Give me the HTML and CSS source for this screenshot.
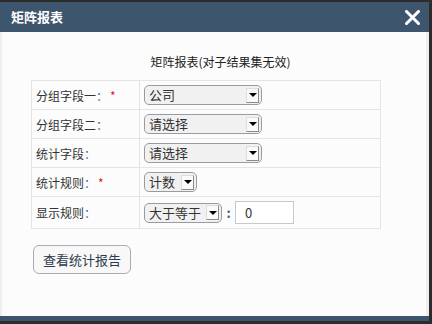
FILE: index.html
```html
<!DOCTYPE html>
<html>
<head>
<meta charset="utf-8">
<link rel="stylesheet" href="styles.css">
</head>
<body>
<div class="dialog">
  <div class="header">
    <span class="title">矩阵报表</span>
    <svg class="close" width="15" height="15" viewBox="0 0 15 15"><path d="M1.5 1.5 L13.5 13.5 M13.5 1.5 L1.5 13.5" stroke="#fff" stroke-width="3" stroke-linecap="square"/></svg>
  </div>
  <div class="body">
    <div class="caption">矩阵报表(对子结果集无效)</div>
    <table class="form">
      <tr class="r">
        <td class="label">分组字段一<span class="colon">：</span><span class="req">*</span></td>
        <td class="field"><div class="sel w117"><span class="val">公司</span><span class="btn"><i class="tri"></i></span></div></td>
      </tr>
      <tr class="r">
        <td class="label">分组字段二<span class="colon">：</span></td>
        <td class="field"><div class="sel w117"><span class="val">请选择</span><span class="btn"><i class="tri"></i></span></div></td>
      </tr>
      <tr class="r">
        <td class="label">统计字段<span class="colon">：</span></td>
        <td class="field"><div class="sel w117"><span class="val">请选择</span><span class="btn"><i class="tri"></i></span></div></td>
      </tr>
      <tr class="r">
        <td class="label">统计规则<span class="colon">：</span><span class="req">*</span></td>
        <td class="field"><div class="sel w52"><span class="val">计数</span><span class="btn"><i class="tri"></i></span></div></td>
      </tr>
      <tr class="r last">
        <td class="label">显示规则<span class="colon">：</span></td>
        <td class="field"><div class="inline"><div class="sel w77"><span class="val">大于等于</span><span class="btn"><i class="tri"></i></span></div><span class="sep">:</span><div class="input">0</div></div></td>
      </tr>
    </table>
    <div class="actions"><span class="button">查看统计报告</span></div>
  </div>
  <div class="footer"></div>
</div>
</body>
</html>
```
FILE: styles.css
```css
html, body {
  margin: 0;
  padding: 0;
  background: #2c2c2c;
  width: 432px;
  height: 324px;
  overflow: hidden;
  font-family: "Noto Sans CJK SC", "Noto Sans", sans-serif;
}
.dialog {
  margin-top: 2px;
  width: 429px;
  display: flex;
  flex-direction: column;
}
.header {
  height: 30px;
  background: #3d556d;
  display: flex;
  align-items: center;
  justify-content: space-between;
  padding: 0 9px 0 11px;
}
.title {
  color: #fff;
  font-size: 13px;
  font-weight: bold;
  line-height: 30px;
}
.close {
  display: block;
}
.body {
  height: 284px;
  background: #fcfcfc;
  border-left: 2px solid #eeeeee;
  border-right: 3px solid #eeeeee;
  box-sizing: border-box;
  padding: 0 0 0 29px;
}
.caption {
  width: 349px;
  text-align: center;
  font-size: 12px;
  color: #222;
  line-height: 18px;
  padding-top: 21px;
  padding-left: 30px;
  height: 48px;
  box-sizing: border-box;
}
.form {
  border-collapse: collapse;
  width: 350px;
}
.form td {
  border: 1px solid #e4e4e4;
  padding: 0;
}
.r {
  height: 29px;
}
.r.last {
  height: 32px;
}
.label {
  width: 108px;
  font-size: 12px;
  color: #333;
  padding-left: 4px !important;
  box-sizing: border-box;
}
.colon {
  color: #3a6a8e;
}
.req {
  color: #e02020;
  padding-left: 2px;
}
.field {
  padding-left: 4px !important;
}
.sel {
  height: 20px;
  box-sizing: border-box;
  border: 1px solid #9a9aa2;
  border-radius: 5px;
  background: #f1f1f1;
  display: flex;
  align-items: center;
  justify-content: space-between;
  padding: 0 2px 0 4px;
  font-size: 13px;
  color: #333;
}
.w117 { width: 118px; }
.w52 { width: 53px; }
.w77 { width: 78px; }
.val {
  line-height: 18px;
  white-space: nowrap;
  flex-shrink: 0;
}
.btn {
  width: 13px;
  height: 15px;
  box-sizing: border-box;
  border: 1px solid #8a8a8a;
  border-left-color: #ddd;
  border-top-color: #ddd;
  background: #fafafa;
  display: flex;
  align-items: center;
  justify-content: center;
  flex-shrink: 0;
}
.tri {
  width: 0;
  height: 0;
  border-left: 4px solid transparent;
  border-right: 4px solid transparent;
  border-top: 4px solid #000;
}
.inline {
  display: flex;
  align-items: center;
}
.sep {
  font-size: 13px;
  color: #3a6a8e;
  width: 13px;
  text-align: center;
  font-weight: bold;
}
.input {
  width: 59px;
  height: 23px;
  box-sizing: border-box;
  border: 1px solid #c8c8c8;
  background: #fff;
  font-size: 13px;
  color: #333;
  line-height: 21px;
  padding-left: 9px;
}
.actions {
  margin-top: 16px;
  display: flex;
}
.button {
  display: flex;
  align-items: center;
  justify-content: center;
  width: 98px;
  height: 29px;
  box-sizing: border-box;
  border: 1px solid #a8acb4;
  border-radius: 6px;
  background: #f8f8f8;
  font-size: 13px;
  color: #2e3b4c;
  margin-left: 2px;
}
.footer {
  height: 5px;
  background: #3d556d;
}
```
